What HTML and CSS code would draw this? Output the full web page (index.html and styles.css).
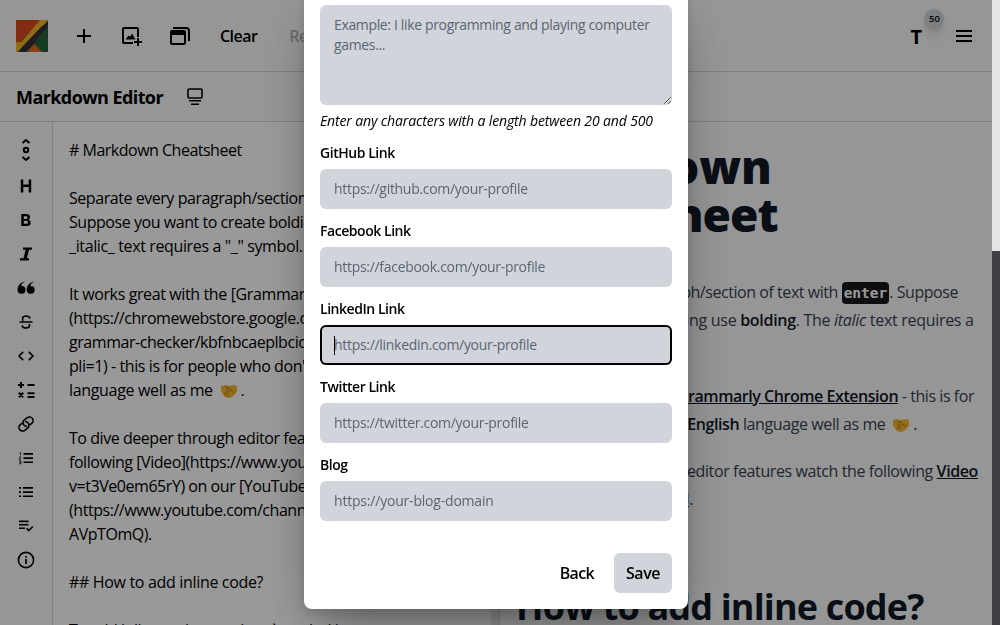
FILE: index.html
```html
<!DOCTYPE html>
<html lang="en">
<head>
<meta charset="utf-8">
<title>Markdown Editor</title>
<link rel="stylesheet" href="styles.css">
</head>
<body>
<div class="app">
  <header class="topbar">
    <svg class="logo" width="32" height="32" viewBox="0 0 32 32">
      <rect width="32" height="32" fill="#2c7044"/>
      <path d="M0 0H26L4 22L0 25Z" fill="#d94a20"/>
      <path d="M11 32L18 24L26 32Z" fill="#e8651c"/>
      <path d="M24 0H32L28 5L5 29L2 32H0V22H5L8 19Z" fill="#f5b324"/>
      <path d="M32 2V9L10 32H2L7 26L25 7Z" fill="#343138"/>
      <path d="M22 17L32 6V32H27L19 23Z" fill="#26633b"/>
    </svg>
    <svg class="ic plus" width="24" height="24" viewBox="0 0 24 24"><path d="M19 13h-6v6h-2v-6H5v-2h6V5h2v6h6v2Z"/></svg>
    <svg class="ic image" width="24" height="24" viewBox="0 0 24 24"><path d="M4 20q-.8 0-1.400-.6T2 18V5q0-.8.600-1.400T4 3h13q.8 0 1.400.6T19 5v8h-2V5H4v13h9v2H4ZM5.500 15.500h10L12 9.500l-1.500 3-2-1-3 4ZM17 22v-3h-3v-2h3v-3h2v3h3v2h-3v3h-2Z"/></svg>
    <svg class="ic stack" width="24" height="24" viewBox="0 0 24 24"><path fill-rule="evenodd" d="M4 6h12q2 0 2 2v11q0 2-2 2H4q-2 0-2-2V8q0-2 2-2Zm0 5v8h12v-8H4ZM5 3h13q4 0 4 4v10h-2V7q0-2-2-2H5Z"/></svg>
    <span class="action">Clear</span>
    <span class="action disabled">Reset</span>
    <span class="type-btn">T<b class="badge">50</b></span>
    <svg class="ic" width="24" height="24" viewBox="0 0 24 24"><path d="M4 6h16v2H4zm0 5h16v2H4zm0 5h16v2H4z"/></svg>
  </header>
  <div class="titlebar">
    <h1 class="app-title">Markdown Editor</h1>
    <svg class="ic" width="20" height="20" viewBox="0 0 20 20"><path d="M4 2h12q1 0 1 1v7q0 1-1 1H4q-1 0-1-1V3q0-1 1-1Z" class="line"/><path d="M4 13h12v1.6H4zM6 16.400h8V18H6z"/></svg>
  </div>
  <main class="workspace">
    <nav class="tools">
      <svg class="ic first" width="24" height="24" viewBox="0 0 24 24"><path class="bold" d="M8.500 5L12 2l3.500 3M8.500 19l3.500 3 3.500-3"/><circle class="bold" cx="12" cy="12" r="2.200"/></svg>
      <svg class="ic" width="24" height="24" viewBox="0 0 24 24"><path d="M6.800 5.500h2.500v5h5.400V5.500h2.500v13h-2.500V13H9.300v5.500H6.800z"/></svg>
      <svg class="ic" width="24" height="24" viewBox="0 0 24 24"><path d="M7.300 18V6h5q3.700 0 3.700 3.200 0 1.900-1.500 2.600 2.200.7 2.200 2.900 0 3.300-4.100 3.300Zm2.500-7h2.300q1.500 0 1.500-1.400T12.100 8.200H9.800Zm0 4.800h2.500q1.800 0 1.800-1.500t-1.800-1.500H9.800Z" fill-rule="evenodd"/></svg>
      <svg class="ic" width="24" height="24" viewBox="0 0 24 24"><path d="M9 5.500h9v2.300h-3l-2.100 8.400H15v2.300H6v-2.300h3.500l2.100-8.400H9z"/></svg>
      <svg class="ic" width="24" height="24" viewBox="0 0 24 24"><path d="M10.500 6q-3 1-3.400 4 4.400-.3 4.400 3.700a4 4 0 0 1-8 0Q3.500 7.500 10.500 5.500Zm9.200 0q-3 1-3.400 4 4.400-.3 4.400 3.700a4 4 0 0 1-8 0Q12.700 7.500 19.700 5.500Z"/></svg>
      <svg class="ic" width="24" height="24" viewBox="0 0 24 24"><path class="line" d="M5.500 12h13M16 8.500Q15.500 6 12 6q-3.500 0-3.500 2.700 0 1.300 1 2M8 15.500q.5 2.500 4 2.500t3.500-2.700q0-.7-.3-1.300"/></svg>
      <svg class="ic" width="24" height="24" viewBox="0 0 24 24"><path class="line" d="M9.200 7.900L5 12l4.200 4.100M14.800 7.900L19 12l-4.200 4.100"/></svg>
      <svg class="ic" width="24" height="24" viewBox="0 0 24 24"><path class="bold" d="M4 7h6M7 4v6M13.500 7h7M4.800 14.800l4.400 4.400M9.200 14.800l-4.400 4.400M13.500 15.200h7M13.500 19h7"/></svg>
      <svg class="ic" width="24" height="24" viewBox="0 0 24 24"><path class="line" d="M13.200 14.200a3.600 3.600 0 0 1-3.300-1 3.600 3.600 0 0 1 0-5.100l2.500-2.500a3.600 3.600 0 0 1 5.100 5.100L16 12.200M10.800 9.800a3.600 3.600 0 0 1 3.300 1 3.600 3.600 0 0 1 0 5.100l-2.500 2.500a3.600 3.600 0 0 1-5.100-5.100L8 11.800" transform="rotate(8 12 12)"/></svg>
      <svg class="ic" width="24" height="24" viewBox="0 0 24 24"><path d="M9.500 7H19v1.700H9.500zm0 4.200H19v1.700H9.500zm0 4.200H19v1.700H9.500z"/><path class="thin" d="M5.500 6.500h1v3M5 11h2l-2 2.300h2M5 14.800h2v3H5m0-1.500h2"/></svg>
      <svg class="ic" width="24" height="24" viewBox="0 0 24 24"><path d="M9 7h10v1.700H9zm0 4.200h10v1.700H9zm0 4.200h10v1.700H9zM5 7h2v1.700H5zm0 4.200h2v1.700H5zm0 4.200h2v1.700H5z"/></svg>
      <svg class="ic" width="24" height="24" viewBox="0 0 24 24"><path d="M5 6.500h9.500v1.700H5zm0 3.400h9.500v1.700H5zm0 3.500h6v1.700H5z"/><path class="line" d="M12.500 14.200l2.300 2.300 4-4"/></svg>
      <svg class="ic" width="24" height="24" viewBox="0 0 24 24"><circle class="line" cx="12" cy="12" r="7.600"/><path d="M11.200 11h1.700v5h-1.700zm0-3h1.700v1.700h-1.700z"/></svg>
    </nav>
    <section class="source">
      <div class="ln"># Markdown Cheatsheet</div>
      <div class="ln"></div>
      <div class="ln">Separate every paragraph/section of</div>
      <div class="ln s3">Suppose you want to create bolding</div>
      <div class="ln s4">_italic_ text requires a "_" symbol.</div>
      <div class="ln"></div>
      <div class="ln s5">It works great with the [Grammarly</div>
      <div class="ln">(https://chromewebstore.google.com</div>
      <div class="ln">grammar-checker/kbfnbcaeplbcioakk</div>
      <div class="ln s8">pli=1) - this is for people who don't</div>
      <div class="ln s9">language well as me <svg class="hand" width="18" height="16" viewBox="0 0 18 16"><path d="M1 3l4-1 4 1 4-1 4 1v6l-5 5-3 1-4-1-4-5Z" fill="#f5b82e"/><path d="M5 4l4 1 5 5M9 5L6 8l2 1 3-2M4 10l3 3M6 9l3 3" class="crease"/></svg>.</div>
      <div class="ln"></div>
      <div class="ln">To dive deeper through editor features</div>
      <div class="ln s11">following [Video](https://www.youtube</div>
      <div class="ln">v=t3Ve0em65rY) on our [YouTube</div>
      <div class="ln">(https://www.youtube.com/channel</div>
      <div class="ln">AVpTOmQ).</div>
      <div class="ln"></div>
      <div class="ln s15">## How to add inline code?</div>
      <div class="ln"></div>
      <div class="ln">To add inline code wrap it as ` symbol in</div>
    </section>
    <div class="gutter"></div>
    <article class="preview">
      <h1 class="doc-title"><span class="t1">Markdown</span><br><span class="t2">Cheatsheet</span></h1>
      <div class="para p1">
        <div class="row"><span class="r1">Separate every paragraph/section of text with <code class="key">enter</code>. Suppose</span></div>
        <div class="row"><span class="r2">you want to create bolding use <b>bolding</b>. The <i>italic</i> text requires a</span></div>
        <div class="row">"_" symbol.</div>
      </div>
      <div class="para p2">
        <div class="row"><span class="r3"><a>Grammarly Chrome Extension</a> - this is for</span></div>
        <div class="row"><span class="r4"><b>English</b> language well as me <svg class="hand" width="18" height="16" viewBox="0 0 18 16"><path d="M1 3l4-1 4 1 4-1 4 1v6l-5 5-3 1-4-1-4-5Z" fill="#f5b82e"/><path d="M5 4l4 1 5 5M9 5L6 8l2 1 3-2M4 10l3 3M6 9l3 3" class="crease"/></svg>.</span></div>
      </div>
      <div class="para p3">
        <div class="row"><span class="r5">editor features watch the following <a>Video</a></span></div>
        <div class="row"><span class="r6"><a>Channel</a>.</span></div>
      </div>
      <h2 class="doc-sub">How to add inline code?</h2>
    </article>
  </main>
</div>
<div class="overlay"></div>
<div class="scrollbar"><div class="thumb"></div></div>
<form class="modal">
  <textarea class="field area" placeholder="Example: I like programming and playing computer games..."></textarea>
  <p class="hint">Enter any characters with a length between 20 and 500</p>
  <label class="label">GitHub Link</label>
  <input class="field" placeholder="https://github.com/your-profile">
  <label class="label">Facebook Link</label>
  <input class="field" placeholder="https://facebook.com/your-profile">
  <label class="label">LinkedIn Link</label>
  <div class="focus-wrap"><input class="field focused" placeholder="https://linkedin.com/your-profile"><i class="caret"></i></div>
  <label class="label">Twitter Link</label>
  <input class="field" placeholder="https://twitter.com/your-profile">
  <label class="label">Blog</label>
  <input class="field blog" placeholder="https://your-blog-domain">
  <div class="buttons"><button type="button" class="btn">Back</button><button type="button" class="btn save">Save</button></div>
</form>
</body>
</html>
```

FILE: styles.css
```css
* { box-sizing: border-box; }
body { margin: 0; height: 625px; overflow: hidden; background: #fafafa; color: #000; font-family: "Open Sans", "Noto Sans", sans-serif; }
.app { width: 992px; height: 625px; overflow: hidden; }
.ic { display: block; flex: none; fill: #000; }
.line, .bold, .thin { fill: none; stroke: #000; stroke-width: 1.6; }
.bold { stroke-width: 2; }
.thin { stroke-width: .7; }
.topbar { height: 72px; padding: 0 16px; display: flex; align-items: center; border-bottom: 1px solid #d4d4d4; }
.plus { margin-left: 24px; }
.image, .stack { margin-left: 24px; }
.action { margin-left: 28px; padding-top: 1px; font-size: 16px; font-weight: 600; letter-spacing: -.55px; }
.disabled { margin-left: 32px; opacity: .3; }
.type-btn { position: relative; margin-left: auto; margin-right: 30px; padding-top: 1px; font-size: 20px; font-weight: 700; }
.badge { position: absolute; left: 14px; top: -13px; width: 20px; height: 20px; border-radius: 50%; background: #d1d5db; font-size: 9.500px; font-weight: 600; line-height: 20px; text-align: center; box-shadow: 0 10px 15px -3px #0002, 0 4px 6px -2px #0002; }
.titlebar { height: 50px; padding: 0 16px; display: flex; align-items: center; gap: 22px; border-bottom: 1px solid #d4d4d4; }
.app-title { margin: 0; font-size: 18px; font-weight: 700; letter-spacing: -.58px; white-space: nowrap; }
.workspace { display: flex; height: 503px; }
.tools { width: 53px; padding: 16px 0 0 14px; border-right: 1px solid #d4d4d4; display: flex; flex-direction: column; gap: 10px; }
.first { margin-bottom: 2px; }
.source { width: 438px; background: #fff; padding: 16px; font-size: 16px; letter-spacing: -.45px; overflow: hidden; }
.ln { height: 24px; line-height: 25px; white-space: nowrap; }
.ln:first-child { letter-spacing: -.5px; }
.s4 { letter-spacing: -.37px; }
.s5 { letter-spacing: -.38px; }
.s8 { letter-spacing: -.42px; }
.s9, .s15 { letter-spacing: -.33px; }
.hand { vertical-align: -3px; margin: 0 3px 0 3px; }
.crease { fill: none; stroke: #c47b16; stroke-width: 1; }
.gutter { width: 9px; background: #e8e8ea; border-right: 1px solid #d4d4d4; }
.preview { width: 492px; height: 503px; padding: 20px 0 0 16px; overflow: hidden; color: #374151; white-space: nowrap; }
.doc-title { margin: 0; font-size: 46px; line-height: 48px; font-weight: 800; color: #111827; letter-spacing: -.1px; }
.t2 { letter-spacing: -1px; }
.para { font-size: 16px; line-height: 28px; letter-spacing: -.4px; }
.row { height: 28px; display: flex; }
.row > span { margin-left: auto; }
.para b, .para a { color: #111827; font-weight: 600; }
.para b { font-weight: 650; }
.para a { text-decoration: underline; }
.p1 { margin-top: 40px; }
.p2 { margin-top: 20px; }
.p3 { margin-top: 19px; }
.r1 { padding-right: 34px; letter-spacing: -.45px; }
.r2 { padding-right: 21px; letter-spacing: -.3px; }
.r3 { padding-right: 18px; letter-spacing: -.45px; }
.r4 { padding-right: 75px; }
.r5 { padding-right: 14px; }
.r6 { padding-right: 299px; }
.key { display: inline-block; height: 22px; padding: 0 2px; border-radius: 4px; background: #18181b; color: #fff; font: 700 14.500px/22px "DejaVu Sans Mono", monospace; letter-spacing: 0; }
.doc-sub { margin: 70px 0 0; font-size: 36px; line-height: 48px; font-weight: 700; letter-spacing: -.84px; color: #111827; }
.overlay { position: fixed; inset: 0 8px 0 0; background: rgba(0, 0, 0, .4); }
.scrollbar { position: fixed; inset: 0 0 0 auto; width: 8px; background: #3f3f46; }
.thumb { height: 251px; background: #e4e4e7; }
.modal { position: fixed; left: 304px; top: -11px; width: 384px; height: 620px; padding: 16px; border-radius: 8px; background: #fff; box-shadow: 0 25px 50px -12px rgba(0, 0, 0, .4), 0 4px 12px rgba(0, 0, 0, .12); }
.field { display: block; width: 352px; height: 40px; margin: 0; padding: 0 14px 1px; border: 0; border-radius: 6px; background: #d1d5db; font: 14px/20px "Open Sans", sans-serif; letter-spacing: -.3px; outline: 0; }
.field::placeholder { color: #5b6472; opacity: 1; }
.area { height: 100px; padding: 10px 14px; resize: vertical; letter-spacing: -.35px; }
.blog { letter-spacing: -.2px; }
.hint { margin: 6px 0 12px; height: 20px; font-size: 14px; line-height: 20px; font-style: italic; letter-spacing: -.13px; white-space: nowrap; }
.label { display: block; height: 20px; margin-bottom: 6px; font-size: 14px; line-height: 20px; font-weight: 600; letter-spacing: -.45px; }
.field + .label, .focus-wrap + .label { margin-top: 12px; }
.focus-wrap { position: relative; }
.focused { box-shadow: inset 0 0 0 2px #000; }
.caret { position: absolute; left: 14px; top: 11px; width: 1px; height: 19px; background: #000; }
.buttons { display: flex; justify-content: flex-end; gap: 8px; margin-top: 32px; }
.btn { height: 40px; padding: 0 12px; border: 0; border-radius: 6px; background: none; font: 600 16px "Open Sans", sans-serif; letter-spacing: -.65px; }
.save { background: #d1d5db; width: 58px; letter-spacing: -.45px; }
```
